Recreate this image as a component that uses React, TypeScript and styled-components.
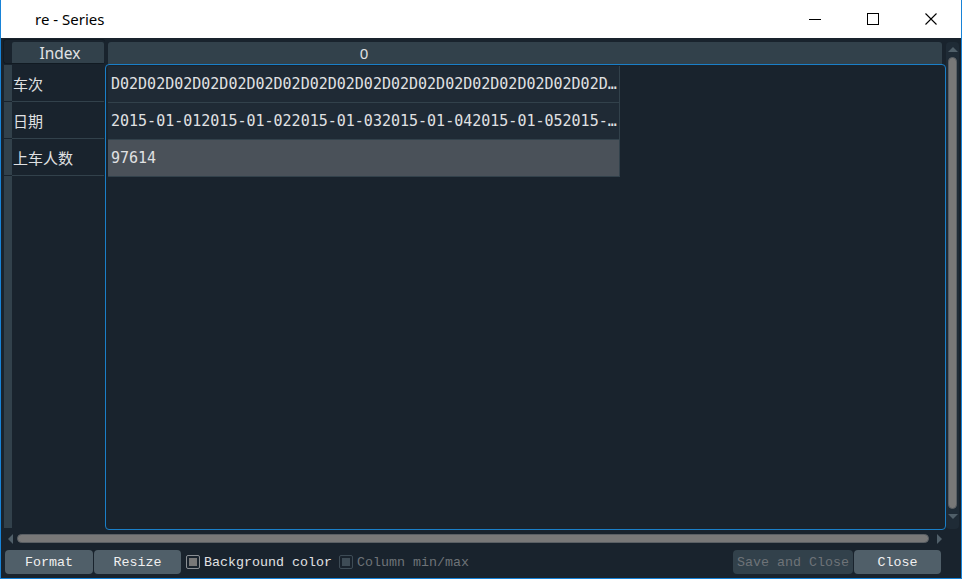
import styled, { createGlobalStyle } from 'styled-components'

const GlobalStyle = createGlobalStyle`
  html, body {
    margin: 0;
    padding: 0;
    background: #ffffff;
  }
  body {
    font-family: "Noto Sans", "Noto Sans CJK SC", sans-serif;
  }
`

// values as shown by the elided cells
const rows = [
  { label: '车次', value: 'D02'.repeat(18) + 'D…', selected: false },
  {
    label: '日期',
    value: ['01', '02', '03', '04', '05'].map((d) => `2015-01-${d}`).join('') + '2015-…',
    selected: false,
  },
  { label: '上车人数', value: '97614', selected: true },
]

function App() {
  return (
    <>
      <GlobalStyle />
      <Window>
        <TitleBar>
          <Title>re - Series</Title>
          <Controls>
            <CtrlBtn>
              <svg width="12" height="12" viewBox="0 0 12 12">
                <line x1="0" y1="6.5" x2="12" y2="6.5" stroke="#000" strokeWidth="1" />
              </svg>
            </CtrlBtn>
            <CtrlBtn>
              <svg width="12" height="12" viewBox="0 0 12 12">
                <rect x="0.5" y="0.5" width="11" height="11" fill="none" stroke="#000" strokeWidth="1" />
              </svg>
            </CtrlBtn>
            <CtrlBtn>
              <svg width="12" height="12" viewBox="0 0 12 12">
                <path d="M0.5 0.5 L11.5 11.5 M11.5 0.5 L0.5 11.5" stroke="#000" strokeWidth="1.1" />
              </svg>
            </CtrlBtn>
          </Controls>
        </TitleBar>

        <Body>
          <Grid>
            <Corner>
              <IndexCell>Index</IndexCell>
            </Corner>
            <ColHeader>
              <ColCell>
                <Section>0</Section>
              </ColCell>
            </ColHeader>
            <VScroll>
              <ArrowUp />
              <VHandle />
              <ArrowDown />
            </VScroll>

            <RowHeader>
              {rows.map((r) => (
                <HeaderRow key={r.label}>
                  <Strip />
                  <RowLabel>{r.label}</RowLabel>
                </HeaderRow>
              ))}
              <StripFill />
            </RowHeader>

            <TableBody>
              {rows.map((r) => (
                <Cell key={r.label} $selected={r.selected}>
                  {r.value}
                </Cell>
              ))}
            </TableBody>

            <HScroll>
              <ArrowLeft />
              <HHandle />
              <ArrowRight />
            </HScroll>
          </Grid>

          <ButtonBar>
            <Btn $w={88}>Format</Btn>
            <Btn $w={87}>Resize</Btn>
            <Check>
              <Box />
              <span>Background color</span>
            </Check>
            <Check $disabled>
              <Box $disabled />
              <span>Column min/max</span>
            </Check>
            <Spacer />
            <Btn $w={120} $disabled>
              Save and Close
            </Btn>
            <Btn $w={87}>Close</Btn>
          </ButtonBar>
        </Body>
      </Window>
    </>
  )
}

export default App

const Window = styled.div`
  width: 962px;
  height: 579px;
  box-sizing: border-box;
  display: flex;
  flex-direction: column;
  border: 1px solid #1883d7;
  border-top: none;
  background: #19232d;
  overflow: hidden;
`

const TitleBar = styled.div`
  height: 38px;
  flex: none;
  background: #ffffff;
  display: flex;
  align-items: center;
  margin: 0 -1px;
`

const Title = styled.div`
  padding-left: 35px;
  font-family: "Noto Sans", sans-serif;
  font-size: 15px;
  color: #000;
  flex: 1;
  margin-top: -1px;
`

const Controls = styled.div`
  display: flex;
  height: 100%;
  padding-right: 2px;
`

const CtrlBtn = styled.div`
  width: 58px;
  height: 100%;
  display: flex;
  align-items: center;
  justify-content: center;
  svg {
    display: block;
  }
`

const Body = styled.div`
  flex: 1;
  display: flex;
  flex-direction: column;
  padding: 1px 0 0 2px;
`

const Grid = styled.div`
  display: grid;
  grid-template-columns: 102px 841px 13px;
  grid-template-rows: 25px 466px 15px;
`

const Corner = styled.div`
  grid-column: 1;
  grid-row: 1;
  border: 1px solid #111a22;
  border-radius: 3px;
  border-right: none;
  padding: 2px 1px 0 8px;
  display: flex;
`

const IndexCell = styled.div`
  flex: 1;
  background: #32414b;
  color: #e0e1e3;
  font-family: "Noto Sans", sans-serif;
  font-size: 15.5px;
  display: flex;
  align-items: center;
  justify-content: center;
  padding-left: 4px;
  border-radius: 2px 2px 0 0;
`

const ColHeader = styled.div`
  grid-column: 2;
  grid-row: 1;
  padding: 3px 4px 0 3px;
  display: flex;
`

const ColCell = styled.div`
  flex: 1;
  background: #32414b;
  border-radius: 3px 3px 0 0;
  display: flex;
`

const Section = styled.div`
  width: 512px;
  color: #e0e1e3;
  font-family: "Noto Sans", sans-serif;
  font-size: 15px;
  display: flex;
  align-items: center;
  justify-content: center;
`

const VScroll = styled.div`
  grid-column: 3;
  grid-row: 1 / 3;
  margin: 3px 0 1px 0;
  background: #1f2b36;
  border-radius: 4px;
  display: flex;
  flex-direction: column;
  align-items: center;
  padding: 3px 0;
`

const ArrowUp = styled.div`
  width: 0;
  height: 0;
  border-left: 5px solid transparent;
  border-right: 5px solid transparent;
  border-bottom: 5px solid #505f69;
  margin-top: 2px;
`

const ArrowDown = styled.div`
  width: 0;
  height: 0;
  border-left: 5px solid transparent;
  border-right: 5px solid transparent;
  border-top: 5px solid #505f69;
  margin-bottom: 7px;
`

const VHandle = styled.div`
  width: 9px;
  flex: 1;
  margin: 5px 0 5px;
  background: #787878;
  border: 1px solid #5a5f64;
  border-radius: 5px;
  box-sizing: border-box;
`

const RowHeader = styled.div`
  grid-column: 1;
  grid-row: 2;
  padding: 1px 1px 2px 1px;
  display: flex;
  flex-direction: column;
`

const HeaderRow = styled.div`
  display: flex;
  height: 37px;
  flex: none;
`

const Strip = styled.div`
  width: 8px;
  background: #32414b;
  margin-bottom: 1px;
`

const StripFill = styled.div`
  width: 8px;
  flex: 1;
  background: #32414b;
`

const RowLabel = styled.div`
  flex: 1;
  border-bottom: 1px solid #32414b;
  color: #e0e1e3;
  font-family: "Noto Sans CJK SC", sans-serif;
  font-size: 15px;
  display: flex;
  align-items: center;
  padding-left: 1px;
  padding-top: 1px;
`

const TableBody = styled.div`
  grid-column: 2;
  grid-row: 2;
  border: 1px solid #1a7fc8;
  border-radius: 4px;
  padding: 1px 0 0 2px;
  display: flex;
  flex-direction: column;
`

const Cell = styled.div<{ $selected?: boolean }>`
  width: 512px;
  height: 37px;
  box-sizing: border-box;
  flex: none;
  background: ${(p) => (p.$selected ? '#4a5159' : '#1f2a35')};
  border-bottom: 1px solid #32414b;
  border-right: 1px solid #32414b;
  color: #e0e1e3;
  font-family: "DejaVu Sans Mono", monospace;
  font-size: 15px;
  line-height: 36px;
  padding-left: 3px;
  white-space: nowrap;
  overflow: hidden;
`

const HScroll = styled.div`
  grid-column: 1 / 3;
  grid-row: 3;
  margin: 2px 0 0 3px;
  height: 13px;
  display: flex;
  align-items: center;
  padding: 0 4px 0 2px;
`

const ArrowLeft = styled.div`
  width: 0;
  height: 0;
  border-top: 5px solid transparent;
  border-bottom: 5px solid transparent;
  border-right: 5px solid #505f69;
`

const ArrowRight = styled.div`
  width: 0;
  height: 0;
  border-top: 5px solid transparent;
  border-bottom: 5px solid transparent;
  border-left: 5px solid #505f69;
`

const HHandle = styled.div`
  flex: 1;
  height: 9px;
  margin: 0 8px 0 4px;
  background: #787878;
  border: 1px solid #5a5f64;
  border-radius: 5px;
  box-sizing: border-box;
`

const ButtonBar = styled.div`
  display: flex;
  align-items: center;
  gap: 1px;
  margin-top: 5px;
  padding: 0 20px 0 2px;
  height: 24px;
`

const Btn = styled.div<{ $w: number; $disabled?: boolean }>`
  width: ${(p) => p.$w}px;
  height: 24px;
  flex: none;
  box-sizing: border-box;
  border-radius: 4px;
  background: ${(p) => (p.$disabled ? '#32414b' : '#505f69')};
  color: ${(p) => (p.$disabled ? '#6e7378' : '#f0f0f0')};
  font-family: "Liberation Mono", monospace;
  font-size: 13.33px;
  display: flex;
  align-items: center;
  justify-content: center;
`

const Check = styled.div<{ $disabled?: boolean }>`
  display: flex;
  align-items: center;
  gap: 4px;
  margin-left: ${(p) => (p.$disabled ? '6px' : '4px')};
  color: ${(p) => (p.$disabled ? '#6e7378' : '#e0e1e3')};
  font-family: "Liberation Mono", monospace;
  font-size: 13.33px;
`

const Box = styled.div<{ $disabled?: boolean }>`
  width: 14px;
  height: 14px;
  box-sizing: border-box;
  border: 1px solid ${(p) => (p.$disabled ? '#3e4c56' : '#8a8f94')};
  border-radius: 2px;
  padding: 2px;
  display: flex;
  &::after {
    content: '';
    flex: 1;
    background: ${(p) => (p.$disabled ? '#3e4c56' : '#787878')};
  }
`

const Spacer = styled.div`
  flex: 1;
`
